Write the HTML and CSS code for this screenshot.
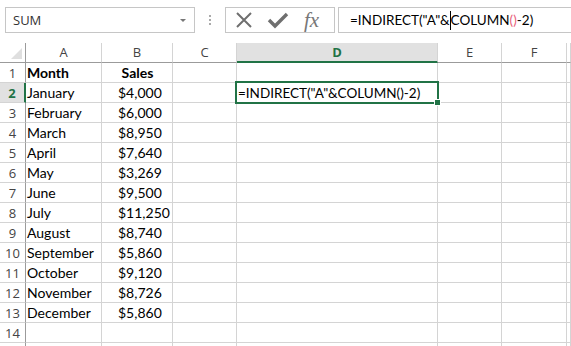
FILE: index.html
```html
<!DOCTYPE html>
<html lang="en">
<head>
  <meta charset="UTF-8" />
  <title>INDIRECT and COLUMN</title>
  <link rel="stylesheet" href="styles.css">
</head>
<body>

<div class="toolbar">
  <div class="name-box">
    <span>SUM</span>
    <span class="name-arrow"></span>
  </div>
  <div class="grip">
    <span></span><span></span><span></span>
  </div>
  <div class="fx-buttons">
    <svg class="icon" width="18" height="18" viewBox="0 0 18 18">
      <path d="M2 2 L16 16 M16 2 L2 16" stroke="#6f6f6f" stroke-width="2" fill="none"/>
    </svg>
    <svg class="icon" width="22" height="18" viewBox="0 0 22 18">
      <path d="M2 9 L8 15 L20 3" stroke="#6f6f6f" stroke-width="3.4" fill="none"/>
    </svg>
    <span class="fx">fx</span>
  </div>
  <div class="formula-bar">=INDIRECT("A"&amp;<span class="caret"></span>COLUMN<span class="paren">()</span>-2)</div>
</div>

<div class="sheet">
  <div class="corner"><span class="corner-tri"></span></div>
  <div class="col-head">A</div>
  <div class="col-head">B</div>
  <div class="col-head">C</div>
  <div class="col-head active">D</div>
  <div class="col-head">E</div>
  <div class="col-head">F</div>
  <div class="col-head"></div>

  <div class="row-head">1</div>
  <div class="cell bold">Month</div>
  <div class="cell bold center">Sales</div>
  <div class="cell"></div><div class="cell"></div><div class="cell"></div><div class="cell"></div><div class="cell"></div>

  <div class="row-head active">2</div>
  <div class="cell">January</div>
  <div class="cell money">$4,000</div>
  <div class="cell"></div>
  <div class="cell selected"><span class="formula">=INDIRECT("A"&amp;COLUMN()-2)</span><span class="handle"></span></div>
  <div class="cell"></div><div class="cell"></div><div class="cell"></div>

  <div class="row-head">3</div>
  <div class="cell">February</div>
  <div class="cell money">$6,000</div>
  <div class="cell"></div><div class="cell"></div><div class="cell"></div><div class="cell"></div><div class="cell"></div>

  <div class="row-head">4</div>
  <div class="cell">March</div>
  <div class="cell money">$8,950</div>
  <div class="cell"></div><div class="cell"></div><div class="cell"></div><div class="cell"></div><div class="cell"></div>

  <div class="row-head">5</div>
  <div class="cell">April</div>
  <div class="cell money">$7,640</div>
  <div class="cell"></div><div class="cell"></div><div class="cell"></div><div class="cell"></div><div class="cell"></div>

  <div class="row-head">6</div>
  <div class="cell">May</div>
  <div class="cell money">$3,269</div>
  <div class="cell"></div><div class="cell"></div><div class="cell"></div><div class="cell"></div><div class="cell"></div>

  <div class="row-head">7</div>
  <div class="cell">June</div>
  <div class="cell money">$9,500</div>
  <div class="cell"></div><div class="cell"></div><div class="cell"></div><div class="cell"></div><div class="cell"></div>

  <div class="row-head">8</div>
  <div class="cell">July</div>
  <div class="cell money">$11,250</div>
  <div class="cell"></div><div class="cell"></div><div class="cell"></div><div class="cell"></div><div class="cell"></div>

  <div class="row-head">9</div>
  <div class="cell">August</div>
  <div class="cell money">$8,740</div>
  <div class="cell"></div><div class="cell"></div><div class="cell"></div><div class="cell"></div><div class="cell"></div>

  <div class="row-head">10</div>
  <div class="cell">September</div>
  <div class="cell money">$5,860</div>
  <div class="cell"></div><div class="cell"></div><div class="cell"></div><div class="cell"></div><div class="cell"></div>

  <div class="row-head">11</div>
  <div class="cell">October</div>
  <div class="cell money">$9,120</div>
  <div class="cell"></div><div class="cell"></div><div class="cell"></div><div class="cell"></div><div class="cell"></div>

  <div class="row-head">12</div>
  <div class="cell">November</div>
  <div class="cell money">$8,726</div>
  <div class="cell"></div><div class="cell"></div><div class="cell"></div><div class="cell"></div><div class="cell"></div>

  <div class="row-head">13</div>
  <div class="cell">December</div>
  <div class="cell money">$5,860</div>
  <div class="cell"></div><div class="cell"></div><div class="cell"></div><div class="cell"></div><div class="cell"></div>

  <div class="row-head">14</div>
  <div class="cell"></div><div class="cell"></div><div class="cell"></div><div class="cell"></div><div class="cell"></div><div class="cell"></div><div class="cell"></div>

  <div class="row-head"></div>
  <div class="cell"></div><div class="cell"></div><div class="cell"></div><div class="cell"></div><div class="cell"></div><div class="cell"></div><div class="cell"></div>
</div>

</body>
</html>
```

FILE: styles.css
```css
body {
  margin: 0;
  background: #fff;
  font-family: Lato, "Liberation Sans", sans-serif;
  overflow: hidden;
}
.toolbar {
  display: flex;
  height: 26px;
  padding: 7px 0 10px 5px;
}
.name-box {
  box-sizing: border-box;
  width: 190px;
  border: 1px solid #c6c6c6;
  display: flex;
  align-items: center;
  justify-content: space-between;
  padding: 0 8px 0 7px;
  font-family: "Open Sans", sans-serif;
  font-size: 13px;
  color: #333;
}
.name-arrow {
  width: 0;
  height: 0;
  border-left: 3px solid transparent;
  border-right: 3px solid transparent;
  border-top: 3px solid #777;
}
.grip {
  width: 30px;
  display: flex;
  flex-direction: column;
  align-items: center;
  justify-content: center;
  gap: 2px;
}
.grip span {
  width: 2px;
  height: 2px;
  background: #aaa;
}
.fx-buttons {
  box-sizing: border-box;
  width: 110px;
  border: 1px solid #c6c6c6;
  display: flex;
  align-items: center;
  padding-left: 9px;
  gap: 14px;
}
.fx {
  font-family: "Liberation Serif", serif;
  font-style: italic;
  font-size: 21px;
  line-height: 20px;
  color: #777;
  margin-left: 1px;
}
.formula-bar {
  box-sizing: border-box;
  flex: 1;
  margin-left: 3px;
  margin-right: -2px;
  border: 1px solid #c6c6c6;
  padding-left: 11px;
  font-size: 13.5px;
  line-height: 24px;
  color: #000;
  white-space: nowrap;
}
.caret {
  display: inline-block;
  width: 0;
  height: 19px;
  vertical-align: -5px;
  border-left: 1px solid #000;
}
.paren {
  color: #e8607a;
}
.sheet {
  display: grid;
  grid-template-columns: 26px 76px 71px 64px 201px 64px 65px 1fr;
  grid-auto-rows: 20px;
}
.sheet > div {
  box-sizing: border-box;
  border-right: 1px solid #d4d4d4;
  border-bottom: 1px solid #d4d4d4;
}
.corner {
  position: relative;
  border-right-color: #9b9b9b !important;
  border-bottom-color: #9b9b9b !important;
}
.corner-tri {
  position: absolute;
  right: 3px;
  bottom: 3px;
  width: 0;
  height: 0;
  border-left: 11px solid transparent;
  border-bottom: 11px solid #dfdfdf;
}
.col-head {
  border-bottom-color: #9b9b9b !important;
  text-align: center;
  font-family: "Open Sans", sans-serif;
  font-size: 13px;
  line-height: 19px;
  color: #444;
}
.col-head.active {
  background: #e1e1e1;
  border-bottom: 2px solid #217346 !important;
  color: #217346;
  font-weight: bold;
}
.row-head {
  border-right-color: #9b9b9b !important;
  text-align: center;
  font-family: "Open Sans", sans-serif;
  font-size: 13px;
  line-height: 20px;
  color: #444;
}
.row-head.active {
  background: #e1e1e1;
  border-right: 2px solid #217346 !important;
  color: #217346;
  font-weight: bold;
}
.cell {
  font-size: 14px;
  line-height: 20px;
  padding-left: 1px;
  color: #000;
  white-space: nowrap;
}
.bold {
  font-weight: bold;
}
.center {
  text-align: center;
}
.money {
  padding-left: 16px;
}
.formula {
  font-size: 13.5px;
}
.selected {
  position: relative;
  overflow: visible;
}
.selected::before {
  content: "";
  position: absolute;
  left: -2px;
  top: -2px;
  right: -2px;
  bottom: -2px;
  border: 2px solid #217346;
}
.handle {
  position: absolute;
  right: -4px;
  bottom: -4px;
  width: 5px;
  height: 5px;
  background: #217346;
  border: 1px solid #fff;
  z-index: 1;
}
```
